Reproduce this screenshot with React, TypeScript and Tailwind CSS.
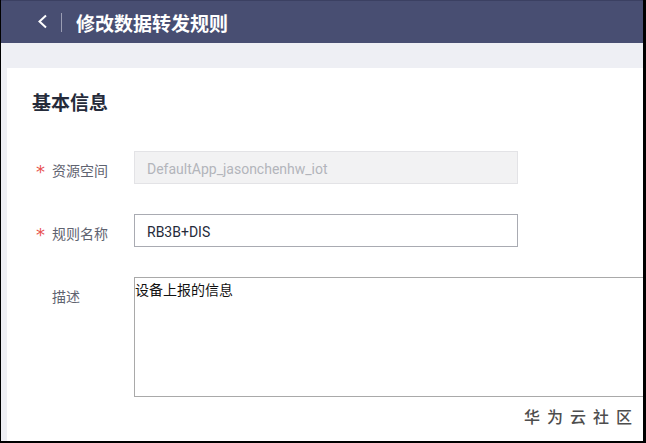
import React from "react";

const cjk = '"Noto Sans CJK SC", "Noto Sans", sans-serif';
const latin = 'Roboto, "Noto Sans CJK SC", sans-serif';

function Required() {
  return (
    <span
      className="w-[16px] shrink-0 pt-[4px] text-[18px] leading-none text-[#e8524f]"
      style={{ fontFamily: '"DejaVu Sans", sans-serif' }}
    >
      *
    </span>
  );
}

function FieldLabel({ text, required }: { text: string; required?: boolean }) {
  return (
    <div className="flex h-[33px] w-[102px] shrink-0 items-center whitespace-nowrap pl-[4px] pt-[5px] text-[14px] text-[#5f6370]">
      {required ? <Required /> : <span className="w-[16px] shrink-0" />}
      <span>{text}</span>
    </div>
  );
}

export default function App() {
  return (
    <div
      className="relative h-[443px] w-[646px] overflow-hidden border-b-2 border-l border-r-[3px] border-black bg-[#eeeff4]"
      style={{ fontFamily: cjk }}
    >
      {/* page header */}
      <header className="flex h-[43px] items-center border-t border-[#3b4062] bg-[#484e72] pl-[36px]">
        <svg width="11" height="15" viewBox="0 0 11 15" className="mt-[-2px] shrink-0">
          <polyline points="9,1.5 2.5,7.5 9,13.5" fill="none" stroke="#ffffff" strokeWidth="2" />
        </svg>
        <div className="ml-[13px] h-[19px] w-px shrink-0 bg-[#9a9db3]" />
        <h1 className="ml-[14px] text-[19px] font-bold leading-none text-white">修改数据转发规则</h1>
      </header>

      <main className="pl-[6px] pt-[25px]">
        <section className="h-[400px] overflow-hidden bg-white pl-[25px] pt-[20px]">
          <h2 className="text-[19px] font-bold leading-[28px] text-[#252b3a]">基本信息</h2>

          <div className="mt-[35px] flex flex-col gap-[30px]">
            <div className="flex">
              <FieldLabel text="资源空间" required />
              <div
                className="flex h-[33px] w-[384px] shrink-0 items-center border border-[#e3e3e6] bg-[#f2f2f3] pl-[12px] pt-[4px] text-[14px] text-[#b3b5bb]"
                style={{ fontFamily: latin }}
              >
                DefaultApp_jasonchenhw_iot
              </div>
            </div>

            <div className="flex">
              <FieldLabel text="规则名称" required />
              <div
                className="flex h-[33px] w-[384px] shrink-0 items-center border border-[#a9abb2] bg-white pl-[12px] pt-[4px] text-[14px] text-[#252b3a]"
                style={{ fontFamily: latin }}
              >
                RB3B+DIS
              </div>
            </div>

            <div className="flex">
              <FieldLabel text="描述" />
              <textarea
                readOnly
                defaultValue="设备上报的信息"
                className="h-[120px] w-[540px] shrink-0 resize-none border border-[#a9a9a9] pt-[1px] text-[14px] leading-[20px] text-[#111111] outline-none"
                style={{ fontFamily: cjk }}
              />
            </div>
          </div>
        </section>
      </main>

      {/* community watermark */}
      <div className="absolute bottom-[17px] right-[4px] text-[16px] font-medium leading-none tracking-[7px] text-[#4d4d4d]">
        华为云社区
      </div>
    </div>
  );
}
